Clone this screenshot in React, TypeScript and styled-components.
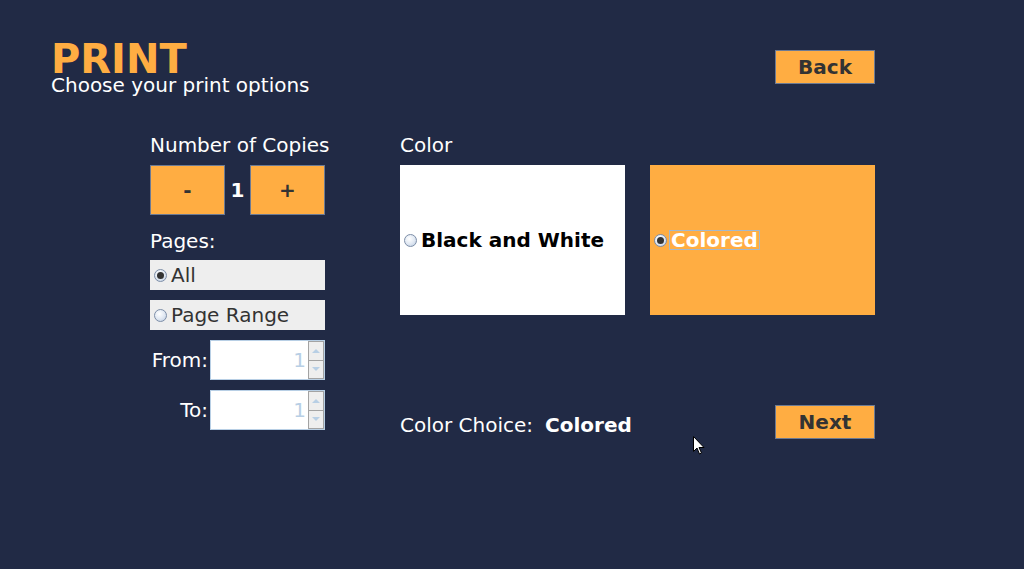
import React, { useState } from "react";
import styled, { createGlobalStyle } from "styled-components";

const GlobalStyle = createGlobalStyle`
  html, body {
    margin: 0;
    padding: 0;
    background: #212a45;
  }
  body {
    font-family: "DejaVu Sans", "Liberation Sans", sans-serif;
  }
`;

const ORANGE = "#ffad42";

const Page = styled.div`
  position: relative;
  width: 1024px;
  height: 569px;
  background: #212a45;
  padding: 42px 0 0 51px;
  box-sizing: border-box;
  overflow: hidden;
`;

const Header = styled.div`
  display: flex;
  justify-content: space-between;
  align-items: flex-start;
  width: 824px;
`;

const TitleBlock = styled.div`
  display: flex;
  flex-direction: column;
`;

const Title = styled.h1`
  margin: 0;
  font-size: 40px;
  line-height: 35px;
  font-weight: bold;
  color: ${ORANGE};
`;

const Subtitle = styled.div`
  font-size: 20px;
  line-height: 16px;
  color: #ffffff;
  white-space: nowrap;
`;

const ActionButton = styled.button<{ $top?: number }>`
  width: 100px;
  height: 34px;
  margin-top: ${(p) => p.$top ?? 0}px;
  background: ${ORANGE};
  border: 1px solid #6c7a93;
  color: #333333;
  font-family: inherit;
  font-size: 20px;
  font-weight: bold;
  padding: 0;
  cursor: pointer;
`;

const Body = styled.div`
  display: flex;
  gap: 75px;
  margin-left: 99px;
  margin-top: 40px;
`;

const LeftColumn = styled.div`
  width: 175px;
  display: flex;
  flex-direction: column;
`;

const RightColumn = styled.div`
  width: 475px;
  display: flex;
  flex-direction: column;
`;

const Label = styled.div<{ $bottom?: number }>`
  font-size: 20px;
  line-height: 24px;
  color: #ffffff;
  white-space: nowrap;
  margin-bottom: ${(p) => p.$bottom ?? 0}px;
`;

const CounterRow = styled.div`
  display: flex;
  align-items: center;
  height: 50px;
  margin-bottom: 14px;
`;

const CounterButton = styled.button`
  width: 75px;
  height: 50px;
  background: ${ORANGE};
  border: 1px solid #6c7a93;
  color: #333333;
  font-family: inherit;
  font-size: 20px;
  font-weight: bold;
  padding: 0;
`;

const CounterValue = styled.span`
  width: 25px;
  text-align: center;
  color: #ffffff;
  font-size: 20px;
  font-weight: bold;
`;

const OptionRow = styled.label`
  display: flex;
  align-items: center;
  height: 30px;
  background: #eeeeee;
  color: #333333;
  font-size: 20px;
  padding-left: 4px;
  margin-bottom: 10px;
  box-sizing: border-box;
`;

const Radio = styled.span<{ $checked: boolean }>`
  width: 13px;
  height: 13px;
  border-radius: 50%;
  box-sizing: border-box;
  border: 1px solid #7d8ea8;
  background: radial-gradient(circle at 40% 35%, #ffffff 0%, #dfe7f2 55%, #b7c7dc 100%);
  margin-right: 4px;
  flex-shrink: 0;
  display: flex;
  align-items: center;
  justify-content: center;
  &::after {
    content: "";
    display: ${(p) => (p.$checked ? "block" : "none")};
    width: 7px;
    height: 7px;
    border-radius: 50%;
    background: #333333;
  }
`;

const SpinnerRow = styled.div`
  display: flex;
  align-items: center;
  height: 40px;
  margin-bottom: 10px;
`;

const SpinnerLabel = styled.span`
  width: 58px;
  text-align: right;
  margin-right: 2px;
  color: #ffffff;
  font-size: 20px;
`;

const SpinnerField = styled.div`
  display: flex;
  width: 115px;
  height: 40px;
  box-sizing: border-box;
  border: 1px solid #b8cfe5;
  background: #ffffff;
`;

const SpinnerValue = styled.div`
  flex: 1;
  display: flex;
  align-items: center;
  justify-content: flex-end;
  padding-right: 2px;
  color: #b8cfe5;
  font-size: 20px;
`;

const SpinnerArrows = styled.div`
  width: 16px;
  display: flex;
  flex-direction: column;
`;

const Arrow = styled.div<{ $up?: boolean }>`
  flex: 1;
  background: #eeeeee;
  border: 1px solid #a3a3a3;
  ${(p) => (p.$up ? "border-bottom: none;" : "")}
  display: flex;
  align-items: center;
  justify-content: center;
  &::after {
    content: "";
    width: 0;
    height: 0;
    border-left: 4px solid transparent;
    border-right: 4px solid transparent;
    ${(p) =>
      p.$up
        ? "border-bottom: 4px solid #b8cfe5;"
        : "border-top: 4px solid #b8cfe5;"}
  }
`;

const ColorPanels = styled.div`
  display: flex;
  gap: 25px;
  margin-top: 8px;
`;

const ColorPanel = styled.label<{ $bg: string; $fg: string }>`
  width: 225px;
  height: 150px;
  display: flex;
  align-items: center;
  padding-left: 4px;
  box-sizing: border-box;
  background: ${(p) => p.$bg};
  color: ${(p) => p.$fg};
  font-size: 20px;
  font-weight: bold;
`;

const PanelText = styled.span<{ $focused?: boolean }>`
  line-height: 18px;
  padding: 0 1px;
  border: 1px solid ${(p) => (p.$focused ? "#a3b8cc" : "transparent")};
  margin-left: -2px;
`;

const ChoiceRow = styled.div`
  display: flex;
  justify-content: space-between;
  align-items: center;
  margin-top: 90px;
`;

const ChoiceText = styled.div`
  color: #ffffff;
  font-size: 20px;
  margin-top: 6px;
`;

const ChoiceValue = styled.span`
  font-weight: bold;
  margin-left: 12px;
`;

const Cursor = styled.svg`
  position: absolute;
  left: 693px;
  top: 436px;
`;

export default function App() {
  const [copies, setCopies] = useState(1);
  const [pages, setPages] = useState<"all" | "range">("all");
  const [color, setColor] = useState<"bw" | "color">("color");

  return (
    <>
      <GlobalStyle />
      <Page>
        <Header>
          <TitleBlock>
            <Title>PRINT</Title>
            <Subtitle>Choose your print options</Subtitle>
          </TitleBlock>
          <ActionButton $top={8}>Back</ActionButton>
        </Header>

        <Body>
          <LeftColumn>
            <Label $bottom={8}>Number of Copies</Label>
            <CounterRow>
              <CounterButton onClick={() => setCopies(Math.max(1, copies - 1))}>-</CounterButton>
              <CounterValue>{copies}</CounterValue>
              <CounterButton onClick={() => setCopies(copies + 1)}>+</CounterButton>
            </CounterRow>
            <Label $bottom={7}>Pages:</Label>
            <OptionRow onClick={() => setPages("all")}>
              <Radio $checked={pages === "all"} />
              All
            </OptionRow>
            <OptionRow onClick={() => setPages("range")}>
              <Radio $checked={pages === "range"} />
              Page Range
            </OptionRow>
            <SpinnerRow>
              <SpinnerLabel>From:</SpinnerLabel>
              <SpinnerField>
                <SpinnerValue>1</SpinnerValue>
                <SpinnerArrows>
                  <Arrow $up />
                  <Arrow />
                </SpinnerArrows>
              </SpinnerField>
            </SpinnerRow>
            <SpinnerRow>
              <SpinnerLabel>To:</SpinnerLabel>
              <SpinnerField>
                <SpinnerValue>1</SpinnerValue>
                <SpinnerArrows>
                  <Arrow $up />
                  <Arrow />
                </SpinnerArrows>
              </SpinnerField>
            </SpinnerRow>
          </LeftColumn>

          <RightColumn>
            <Label>Color</Label>
            <ColorPanels>
              <ColorPanel $bg="#ffffff" $fg="#000000" onClick={() => setColor("bw")}>
                <Radio $checked={color === "bw"} />
                <PanelText $focused={color === "bw"}>Black and White</PanelText>
              </ColorPanel>
              <ColorPanel $bg={ORANGE} $fg="#ffffff" onClick={() => setColor("color")}>
                <Radio $checked={color === "color"} />
                <PanelText $focused={color === "color"}>Colored</PanelText>
              </ColorPanel>
            </ColorPanels>
            <ChoiceRow>
              <ChoiceText>
                Color Choice:
                <ChoiceValue>{color === "color" ? "Colored" : "Black and White"}</ChoiceValue>
              </ChoiceText>
              <ActionButton>Next</ActionButton>
            </ChoiceRow>
          </RightColumn>
        </Body>

        <Cursor width="12" height="20" viewBox="0 0 12 20">
          <path d="M0.5 0.5 L0.5 15.5 L4 12 L6.5 18 L8.5 17 L6 11.5 L11 11.5 Z" fill="#ffffff" stroke="#000000" strokeWidth="1" />
        </Cursor>
      </Page>
    </>
  );
}
